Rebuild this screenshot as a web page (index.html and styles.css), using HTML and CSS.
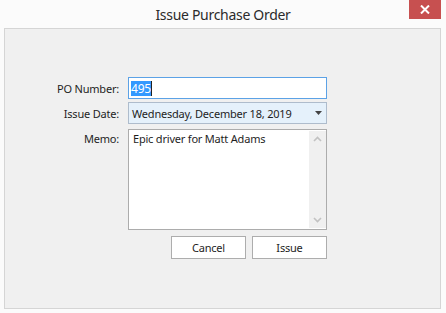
FILE: index.html
```html
<!DOCTYPE html>
<html lang="en">
<head>
  <meta charset="UTF-8">
  <title>Issue Purchase Order</title>
  <link rel="stylesheet" href="styles.css">
</head>
<body>
  <div class="titlebar">
    <div></div>
    <div class="title">Issue Purchase Order</div>
    <div class="close_btn">
      <svg width="10" height="9" viewBox="0 0 10 9"><path d="M1 0.5 L9 8.5 M9 0.5 L1 8.5" stroke="#fff" stroke-width="2"/></svg>
    </div>
  </div>
  <div class="panel">
    <div class="form">
      <label class="form_label">PO Number:</label>
      <div class="po_input"><span class="selected">495</span><span class="caret"></span></div>

      <label class="form_label">Issue Date:</label>
      <div class="date_combo">
        <span>Wednesday, December 18, 2019</span>
        <svg width="7" height="4" viewBox="0 0 7 4"><path d="M0 0 H7 L3.5 4 Z" fill="#444"/></svg>
      </div>

      <label class="form_label memo_label">Memo:</label>
      <div class="memo">
        <div class="memo_text">Epic driver for Matt Adams</div>
        <div class="scrollbar">
          <svg width="9" height="6" viewBox="0 0 9 6"><path d="M1 5 L4.5 1.5 L8 5" fill="none" stroke="#c2c2c2" stroke-width="1.6"/></svg>
          <svg width="9" height="6" viewBox="0 0 9 6"><path d="M1 1 L4.5 4.5 L8 1" fill="none" stroke="#c2c2c2" stroke-width="1.6"/></svg>
        </div>
      </div>

      <div></div>
      <div class="buttons">
        <div class="btn">Cancel</div>
        <div class="btn">Issue</div>
      </div>
    </div>
  </div>
</body>
</html>
```

FILE: styles.css
```css
html, body {
  margin: 0;
  height: 100%;
}
body {
  background-color: #fbfbfb;
  font-family: "Noto Sans", "Open Sans", sans-serif;
  font-size: 11px;
  letter-spacing: -0.2px;
  color: #1e1e1e;
  display: flex;
  flex-direction: column;
}
.titlebar {
  height: 28px;
  display: grid;
  grid-template-columns: 1fr auto 1fr;
  align-items: start;
}
.title {
  font-size: 14px;
  letter-spacing: -0.3px;
  color: #2b2b2b;
  line-height: 29px;
}
.close_btn {
  justify-self: end;
  margin-right: 5px;
  width: 32px;
  height: 19px;
  background-color: #c75050;
  display: flex;
  align-items: center;
  justify-content: center;
}
.panel {
  flex: 1;
  margin: 0 5px 4px 4px;
  border: 1px solid #d5d5d5;
  background-color: #f0f0f0;
}
.form {
  display: grid;
  grid-template-columns: 114px 199px;
  grid-template-rows: 22px 22px 103px 23px;
  column-gap: 9px;
  row-gap: 3px;
  padding-top: 48px;
}
.form_label {
  text-align: right;
  align-self: center;
  color: #1e1e1e;
}
.memo_label {
  align-self: start;
  padding-top: 4px;
}
.po_input {
  box-sizing: border-box;
  border: 1px solid #5ca2e6;
  background-color: #fff;
  display: flex;
  align-items: center;
  padding-left: 2px;
}
.selected {
  background-color: #3399ff;
  color: #fff;
  line-height: 15px;
  font-size: 12px;
}
.caret {
  width: 1px;
  height: 15px;
  background-color: #222;
}
.date_combo {
  box-sizing: border-box;
  border: 1px solid #aebccc;
  background-color: #e5f1fb;
  display: flex;
  align-items: center;
  justify-content: space-between;
  padding: 0 4px 0 3px;
}
.memo {
  margin-top: 2px;
  box-sizing: border-box;
  border: 1px solid #acacac;
  background-color: #fff;
  display: flex;
}
.memo_text {
  flex: 1;
  padding: 1px 4px;
}
.scrollbar {
  width: 17px;
  margin: 1px 0;
  background-color: #f0f0f0;
  display: flex;
  flex-direction: column;
  justify-content: space-between;
  align-items: center;
  padding: 5px 0;
}
.buttons {
  margin-top: 3px;
  display: flex;
  justify-content: flex-end;
  gap: 6px;
}
.btn {
  box-sizing: border-box;
  width: 75px;
  height: 23px;
  border: 1px solid #adadad;
  background-color: #fff;
  display: flex;
  align-items: center;
  justify-content: center;
}
```
